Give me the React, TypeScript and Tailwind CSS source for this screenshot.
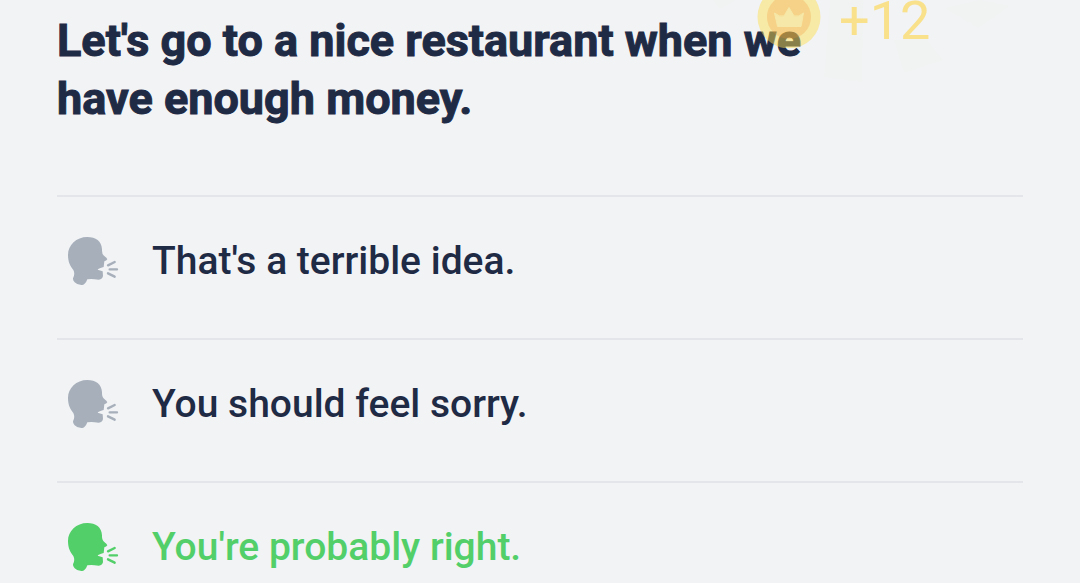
import React from "react";

type Option = { text: string; correct?: boolean };

const options: Option[] = [
  { text: "That's a terrible idea." },
  { text: "You should feel sorry." },
  { text: "You're probably right.", correct: true },
];

function SpeakingHead() {
  return (
    <svg viewBox="48 33 162 150" className="h-[50px] w-[54px] shrink-0" aria-hidden="true">
      <path
        fill="currentColor"
        d="M112 36C79 36 54 60 54 90C54 112 61 123 70 135Q76 147 69 160Q68 165 74 172Q82 181 97 180Q106 179 112 163Q125 161 146 164Q158 162 159 153L158 139L143 134Q144 131 161 126L163 109Q169 108 172 103Q171 98 162 92Q155 86 156 73C155 48 137 36 112 36Z"
      />
      <path
        stroke="currentColor"
        strokeWidth="7"
        strokeLinecap="round"
        fill="none"
        d="M174 121L194 111M179 133H201M174 145L194 155"
      />
    </svg>
  );
}

function Confetti() {
  return (
    <svg
      viewBox="0 0 320 100"
      className="pointer-events-none absolute top-0 left-[700px] h-[100px] w-[320px]"
      aria-hidden="true"
    >
      <g fill="#f1f3f2">
        <path d="M130 0H163L162 82L124 77Z" />
        <path d="M194 40L204 73L243 60L225 38Z" />
        <path d="M245 8L278 28L310 6L280 0Z" />
        <path d="M12 0L20 9L36 0Z" />
      </g>
    </svg>
  );
}

function Reward() {
  return (
    <div className="pointer-events-none absolute -top-4 left-[757px] flex items-center gap-[18px]">
      <svg viewBox="0 0 64 64" className="size-16" aria-hidden="true">
        <circle cx="32" cy="33" r="31.5" fill="#fddd4f" fillOpacity="0.48" />
        <circle cx="32" cy="33" r="22" fill="#f0902d" fillOpacity="0.25" />
        <path
          d="M17.5 29Q23 33.500 27 32L32 23.500L37 32Q41 33.500 46.500 29L44 42.500H20.500Z"
          fill="#f6e8a8"
          stroke="#f6e8a8"
          strokeLinejoin="round"
        />
      </svg>
      <span className="pt-[10px] text-[54px] leading-[54px] text-[#f9e08a]">+12</span>
    </div>
  );
}

export default function App() {
  return (
    <main className="relative min-h-screen overflow-hidden bg-[#f1f3f5] px-[57px] pt-3 font-['Roboto',sans-serif] text-[#1f2a44]">
      <Confetti />
      <h1 className="max-w-[800px] text-[45px] leading-[58px] font-bold [-webkit-text-stroke:1px_#1f2a44]">
        Let's go to a nice restaurant when we have enough money.
      </h1>
      <ul className="mt-[67px]">
        {options.map((option) => (
          <li key={option.text} className="border-t-2 border-[#e3e5ea]">
            <button
              type="button"
              className={
                "flex w-full items-center gap-8 pt-[39px] pl-[9px] text-left " +
                (option.correct ? "pb-3" : "pb-[52px]")
              }
            >
              <span className={option.correct ? "text-[#52cf68]" : "text-[#a7afbb]"}>
                <SpeakingHead />
              </span>
              <span
                className={
                  "text-[39px] leading-[50px] font-medium " +
                  (option.correct ? "text-[#52cf68]" : "text-[#1f2a44]")
                }
              >
                {option.text}
              </span>
            </button>
          </li>
        ))}
      </ul>
      <Reward />
    </main>
  );
}
